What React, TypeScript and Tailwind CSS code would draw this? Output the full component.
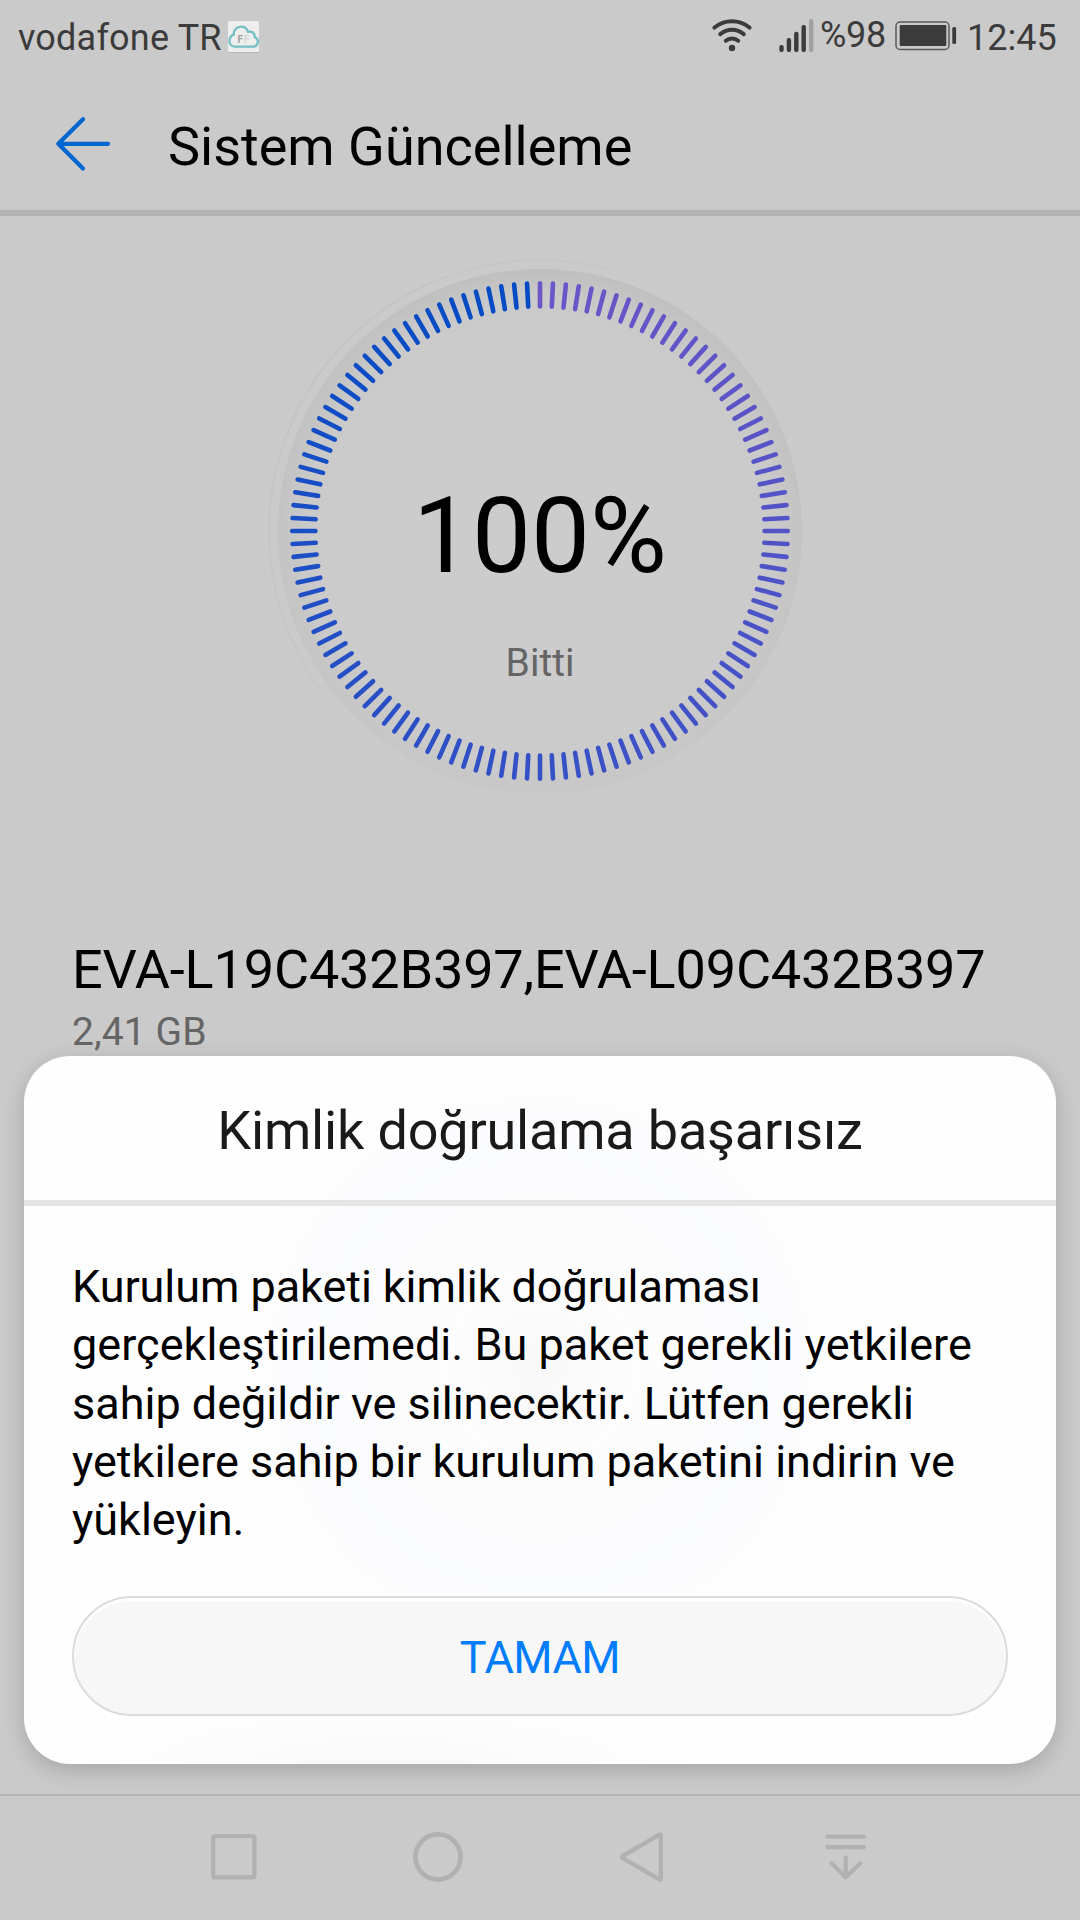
import React from 'react';

const TICKS = Array.from({ length: 120 }, (_, i) => i);

// Purple at twelve o'clock, turning to blue clockwise
const tickColor = (i: number) => {
    const t = i / 119;
    return `rgb(${Math.round(108 - 108 * t)}, ${Math.round(86 - 11 * t)}, ${Math.round(200 - 4 * t)})`;
};

const StatusBar: React.FC = () => (
    <div className="flex h-[72px] items-start justify-between pl-[18px] pr-[23px] text-[36px] leading-[42px] text-[#3b3b3b]">
        <div className="flex pt-[17px]">
            <span className="w-[210px] whitespace-nowrap tracking-[0.2px]">vodafone TR</span>
            <svg className="mt-[4px]" width="31" height="32" viewBox="0 0 31 32">
                <rect x="0" y="1" width="31" height="31" rx="1.5" fill="#b5b5b5" />
                <rect x="0" y="0" width="31" height="31" rx="1.5" fill="#eeeeee" />
                <path
                    d="M6.8 25.6H25a4.9 4.9 0 0 0 1.7-9.5c.4-4.2-3-6.3-6.6-5.3C18.9 7.4 16.2 5.6 13 5.6c-4.4 0-7.6 3.5-7.3 8.1C3 14.7 1.5 17 1.5 19.9c0 3.3 2.2 5.7 5.3 5.7z"
                    fill="none"
                    stroke="#73bfc3"
                    strokeWidth="2.3"
                />
                <text x="9.5" y="21.5" fontSize="10" fontWeight="700" fill="#9aa39b">F</text>
                <text x="16" y="21.5" fontSize="10" fontWeight="700" fill="#d3d6d3">F</text>
            </svg>
        </div>

        <div className="flex">
            <svg className="mt-[19px]" width="40" height="33" viewBox="0 0 40 33" fill="none" stroke="#3b3b3b" strokeWidth="4" strokeLinecap="round">
                <path d="M2.5 8.6C12.5 0 27.5 0 37.5 8.6" />
                <path d="M8.2 15.2c6.9-5.9 16.7-5.9 23.6 0" />
                <path d="M13.8 21.7c3.6-3 8.8-3 12.4 0" />
                <circle cx="20" cy="29" r="3.2" fill="#3b3b3b" stroke="none" />
            </svg>
            <svg className="ml-[27px] mt-[19px]" width="35" height="33" viewBox="0 0 35 33" fill="#3b3b3b">
                <rect x="0.3" y="26" width="4.4" height="7" rx="2" />
                <rect x="7.7" y="19" width="4.4" height="14" rx="2" />
                <rect x="15.1" y="12.7" width="4.4" height="20.3" rx="2" />
                <rect x="22.5" y="6" width="4.4" height="27" rx="2" />
                <rect x="30" y="0" width="4.4" height="33" rx="2" fill="#a0a0a0" />
            </svg>
            <span className="ml-[6px] w-[75px] whitespace-nowrap pt-[14px] tracking-[-0.3px]">%98</span>
            <svg className="mt-[21px]" width="62" height="30" viewBox="0 0 62 30">
                <rect x="1" y="1" width="53" height="27.5" rx="4" fill="none" stroke="#5a5a5a" strokeWidth="1.5" />
                <rect x="4.7" y="4" width="46.6" height="21" rx="1" fill="#3b3b3b" />
                <rect x="57.3" y="6" width="3.8" height="17" rx="1.5" fill="#3b3b3b" />
            </svg>
            <span className="ml-[10px] w-[90px] whitespace-nowrap pt-[17px]">12:45</span>
        </div>
    </div>
);

const Header: React.FC = () => (
    <header className="flex h-[144px] items-start border-b-[6px] border-[#b3b3b3] pl-[54px]">
        <svg className="mt-[43px]" width="58" height="58" viewBox="0 0 58 58" fill="none" stroke="#0066d0" strokeWidth="4.2" strokeLinecap="round" strokeLinejoin="round">
            <path d="M29 4.3 4.3 28.8 29 53.5M4.3 28.8H54" />
        </svg>
        <h1 className="ml-[56px] mt-[43px] text-[54px] leading-[64px] text-black">Sistem Güncelleme</h1>
    </header>
);

const ProgressDial: React.FC = () => (
    <div className="grid h-[630px] place-items-start justify-center">
        <svg className="col-start-1 row-start-1 mt-[35px]" width="560" height="560" viewBox="-280 -280 560 560">
            <defs>
                <radialGradient id="dial" cx="0" cy="0" r="262" gradientUnits="userSpaceOnUse">
                    <stop offset="0.78" stopColor="#cccccc" />
                    <stop offset="0.9" stopColor="#c8c8c8" />
                    <stop offset="1" stopColor="#bfbfbf" />
                </radialGradient>
                <linearGradient id="fade" x1="0" y1="0" x2="0" y2="1">
                    <stop offset="0" stopColor="#cccccc" stopOpacity="0" />
                    <stop offset="1" stopColor="#cccccc" stopOpacity="0.6" />
                </linearGradient>
                <linearGradient id="rim" x1="0" y1="0" x2="1" y2="0.7">
                    <stop offset="0.1" stopColor="#c2c2c2" />
                    <stop offset="0.75" stopColor="#cacaca" />
                </linearGradient>
            </defs>
            <circle r="271" fill="none" stroke="url(#rim)" strokeWidth="1.5" />
            <circle r="262" fill="url(#dial)" />
            <circle r="262" fill="url(#fade)" />
            {TICKS.map((i) => (
                <line
                    key={i}
                    y1="-247.8"
                    y2="-224.6"
                    stroke={tickColor(i)}
                    strokeWidth="4.6"
                    strokeLinecap="round"
                    transform={`rotate(${i * 3})`}
                />
            ))}
        </svg>
        <div className="col-start-1 row-start-1 flex w-[560px] flex-col items-center">
            <span className="mt-[259px] text-[105px] leading-[124px] text-black">100%</span>
            <span className="mt-[41px] text-[39px] leading-[46px] text-[#656565]">Bitti</span>
        </div>
    </div>
);

const Dialog: React.FC = () => (
    <section className="mx-[24px] mt-[6px] h-[708px] rounded-[46px] bg-[#fefefe] bg-[radial-gradient(ellipse_300px_60px_at_35%_100%,#f9f9f9_0,#fefefe00_100%),radial-gradient(circle_at_50%_44%,#f8f8f8_0,#fdfdfd_14%,#fbfcfe_34%,#fefefe_50%)] shadow-[0_6px_22px_rgba(0,0,0,0.18)]">
        <h2 className="h-[150px] border-b-[6px] border-[#e5e5e5] pt-[43px] text-center text-[54px] leading-[64px] tracking-[-0.19px] text-[#1a1a1a]">
            Kimlik doğrulama başarısız
        </h2>
        <p className="mx-[48px] h-[390px] whitespace-nowrap pt-[52px] text-[45px] leading-[58.25px] text-black">
            <span className="tracking-[-0.06px]">Kurulum paketi kimlik doğrulaması</span><br />
            <span className="tracking-[0.04px]">gerçekleştirilemedi. Bu paket gerekli yetkilere</span><br />
            sahip değildir ve silinecektir. Lütfen gerekli<br />
            yetkilere sahip bir kurulum paketini indirin ve<br />
            yükleyin.
        </p>
        <button className="mx-[48px] block h-[120px] w-[936px] rounded-full border-2 border-[#dcdcdc] bg-[#f7f7f7] pt-[2px] text-[45px] leading-[53px] tracking-[-0.5px] text-[#007dff] shadow-[inset_0_3px_2px_#ffffff]">
            TAMAM
        </button>
    </section>
);

const NavBar: React.FC = () => (
    <nav className="mt-[30px] flex h-[126px] items-start border-t-2 border-[#b3b3b3] pl-[208px] pt-[34px]">
        <svg width="52" height="56" viewBox="0 0 52 56" fill="none" stroke="#b1b1b1" strokeWidth="4.3">
            <rect x="5.2" y="6.2" width="41.2" height="41.2" rx="1.5" />
        </svg>
        <svg className="ml-[150px]" width="56" height="56" viewBox="0 0 56 56" fill="none" stroke="#b1b1b1" strokeWidth="4.6">
            <circle cx="28" cy="27" r="22.6" />
        </svg>
        <svg className="ml-[150px]" width="52" height="56" viewBox="0 0 52 56" fill="none" stroke="#b1b1b1" strokeWidth="4.3" strokeLinejoin="round">
            <path d="M43.5 4.6Q44.8 4 44.8 5.8V48.2Q44.8 50 43.5 49.4L6.8 28.2Q5.4 27 6.8 25.8Z" />
        </svg>
        <svg className="ml-[150px]" width="56" height="56" viewBox="0 0 56 56" fill="none" stroke="#b1b1b1" strokeWidth="4.3" strokeLinecap="round" strokeLinejoin="round">
            <path d="M9.5 6.6h36.4M9.5 17.2h36.4M27.7 27.5V47M13.5 33.2 27.7 47.3 42.2 33.2" />
        </svg>
    </nav>
);

const App: React.FC = () => (
    <main className="h-[1920px] w-[1080px] overflow-hidden bg-[#cacaca] font-[Roboto,sans-serif]">
        <StatusBar />
        <Header />
        <ProgressDial />
        <div className="h-[204px] px-[72px] pt-[92px]">
            <p className="whitespace-nowrap text-[54px] leading-[64px] tracking-[-0.16px] text-black">EVA-L19C432B397,EVA-L09C432B397</p>
            <p className="mt-[7px] text-[39px] leading-[46px] tracking-[0.1px] text-[#656565]">2,41 GB</p>
        </div>
        <Dialog />
        <NavBar />
    </main>
);

export default App;
